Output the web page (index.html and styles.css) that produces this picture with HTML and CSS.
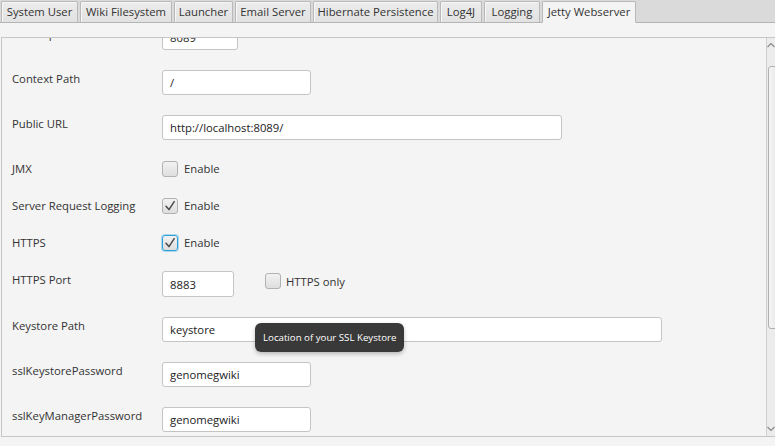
FILE: index.html
```html
<!DOCTYPE html>
<html>
<head>
<meta charset="utf-8">
<link rel="stylesheet" href="styles.css">
</head>
<body>
<div class="tabpane">
  <div class="tabheader">
    <div class="tab w1">System User</div>
    <div class="tab w2">Wiki Filesystem</div>
    <div class="tab w3">Launcher</div>
    <div class="tab w4">Email Server</div>
    <div class="tab w5">Hibernate Persistence</div>
    <div class="tab w6">Log4J</div>
    <div class="tab w7">Logging</div>
    <div class="tab w8 selected">Jetty Webserver</div>
  </div>
  <div class="tabcontent">
    <div class="scrollpane">
      <div class="viewport">
        <div class="form">
          <div class="label top">Server port</div>
          <div class="cell"><div class="field f-port">8089</div></div>

          <div class="label top">Context Path</div>
          <div class="cell"><div class="field f-short">/</div></div>

          <div class="label top">Public URL</div>
          <div class="cell"><div class="field f-url">http://localhost:8089/</div></div>

          <div class="label mid">JMX</div>
          <div class="cell check-row"><span class="checkbox"></span><span class="cblabel">Enable</span></div>

          <div class="label mid">Server Request Logging</div>
          <div class="cell check-row"><span class="checkbox checked"><svg viewBox="0 0 16 16" width="16" height="16"><path d="M4 8.2 L7 11.6 L12.2 3.6" fill="none" stroke="#4a4a4a" stroke-width="1.5" stroke-linejoin="round" stroke-linecap="round"/></svg></span><span class="cblabel">Enable</span></div>

          <div class="label mid">HTTPS</div>
          <div class="cell check-row"><span class="checkbox checked focused"><svg viewBox="0 0 16 16" width="16" height="16"><path d="M4 8.2 L7 11.6 L12.2 3.6" fill="none" stroke="#4a4a4a" stroke-width="1.5" stroke-linejoin="round" stroke-linecap="round"/></svg></span><span class="cblabel">Enable</span></div>

          <div class="label top">HTTPS Port</div>
          <div class="cell port-row">
            <div class="field f-hport">8883</div>
            <div class="inline-check"><span class="checkbox"></span><span class="cblabel">HTTPS only</span></div>
          </div>

          <div class="label top">Keystore Path</div>
          <div class="cell"><div class="field f-key">keystore</div></div>

          <div class="label top">sslKeystorePassword</div>
          <div class="cell"><div class="field f-short">genomegwiki</div></div>

          <div class="label top">sslKeyManagerPassword</div>
          <div class="cell"><div class="field f-short">genomegwiki</div></div>
        </div>
      </div>
      <div class="vscroll">
        <div class="arrow up"><svg viewBox="0 0 14 8" width="14" height="8"><path d="M3.5 6 L7 2.5 L10.5 6" fill="none" stroke="#8a8a8a" stroke-width="1.2"/></svg></div>
        <div class="track"><div class="thumb"></div></div>
        <div class="arrow down"><svg viewBox="0 0 14 8" width="14" height="8"><path d="M3.5 2 L7 5.5 L10.5 2" fill="none" stroke="#8a8a8a" stroke-width="1.2"/></svg></div>
      </div>
    </div>
  </div>
</div>
<div class="tooltip">Location of your SSL Keystore</div>
</body>
</html>
```
FILE: styles.css
```css
html, body {
  margin: 0;
  padding: 0;
  width: 775px;
  height: 446px;
  overflow: hidden;
  background: #f4f4f4;
  font-family: "Open Sans", "Noto Sans", sans-serif;
  font-size: 11.3px;
  color: #333;
}
.tabpane {
  display: flex;
  flex-direction: column;
  height: 446px;
}
.tabheader {
  height: 22px;
  background: #dadada;
  border-bottom: 1px solid #b4b4b4;
  display: flex;
  align-items: flex-end;
  gap: 2px;
  padding-left: 1px;
}
.tab {
  box-sizing: border-box;
  height: 22px;
  margin-bottom: -1px;
  border: 1px solid #b9b9b9;
  border-bottom: 1px solid #b4b4b4;
  border-radius: 2px 2px 0 0;
  background: linear-gradient(#ececec, #e2e2e2);
  box-shadow: inset 1px 1px 0 #f6f6f6;
  display: flex;
  align-items: center;
  justify-content: center;
  white-space: nowrap;
  color: #333;
  padding-bottom: 1px;
}
.tab.selected {
  background: #f4f4f4;
  border-bottom-color: #f4f4f4;
  box-shadow: none;
}
.w1 { width: 77px; }
.w2 { width: 92px; }
.w3 { width: 59px; }
.w4 { width: 76px; }
.w5 { width: 125px; }
.w6 { width: 42px; }
.w7 { width: 56px; }
.w8 { width: 94px; }

.tabcontent {
  flex: 1;
  display: flex;
  padding: 14px 0 9px 1px;
}
.scrollpane {
  flex: 1;
  margin-right: -7px;
  border: 1px solid #c6c6c6;
  background: #f4f4f4;
  display: flex;
  overflow: hidden;
}
.viewport {
  flex: 1;
  overflow: hidden;
}
.form {
  margin-top: -13px;
  padding-left: 10px;
  display: grid;
  grid-template-columns: 150px 1fr;
  row-gap: 20px;
}
.label {
  white-space: nowrap;
  line-height: 16px;
}
.label.top { padding-top: 1px; }
.label.mid { align-self: center; }
.cell {
  display: flex;
  align-items: center;
}
.field {
  box-sizing: border-box;
  height: 25px;
  background: #fff;
  border: 1px solid #c4c4c4;
  border-radius: 3px;
  padding: 0 7px;
  display: flex;
  align-items: center;
  color: #222;
  white-space: nowrap;
}
.f-port { width: 76px; }
.f-short { width: 149px; }
.f-url { width: 400px; }
.f-hport { width: 72px; height: 26px; }
.f-key { width: 500px; }

.check-row { height: 17px; }
.checkbox {
  box-sizing: border-box;
  width: 16px;
  height: 16px;
  border: 1px solid #b2b2b2;
  border-radius: 3px;
  background: linear-gradient(#f2f2f2, #dedede);
  display: inline-flex;
  align-items: center;
  justify-content: center;
  flex: none;
  position: relative;
}
.checkbox svg {
  position: absolute;
  left: -1px;
  top: -1px;
}
.checkbox.focused {
  border-color: #2c9fd6;
  box-shadow: 0 0 0 1px #a9d8ef;
}
.cblabel {
  margin-left: 6px;
  color: #333;
}
.port-row { gap: 31px; }
.inline-check {
  display: flex;
  align-items: center;
  margin-top: -6px;
}
.inline-check .cblabel { margin-left: 5px; }

.vscroll {
  width: 14px;
  flex: none;
  border-left: 1px solid #d0d0d0;
  background: #ececec;
  display: flex;
  flex-direction: column;
}
.arrow {
  height: 14px;
  display: flex;
  align-items: center;
  justify-content: flex-start;
}
.arrow svg { margin-left: -3px; }
.track {
  flex: 1;
  padding: 14px 0 0 1px;
}
.thumb {
  height: 263px;
  box-sizing: border-box;
  border: 1px solid #b0b0b0;
  border-radius: 3px;
  background: linear-gradient(90deg, #f4f4f4, #e4e4e4);
}

.tooltip {
  position: absolute;
  left: 255px;
  top: 323px;
  height: 29px;
  width: 149px;
  box-sizing: border-box;
  background: rgba(40, 40, 40, 0.92);
  border-radius: 6px;
  color: #fff;
  font-size: 9.7px;
  display: flex;
  align-items: center;
  padding: 0 8px;
  white-space: nowrap;
  box-shadow: 0 2px 4px rgba(0,0,0,0.25);
}
```
